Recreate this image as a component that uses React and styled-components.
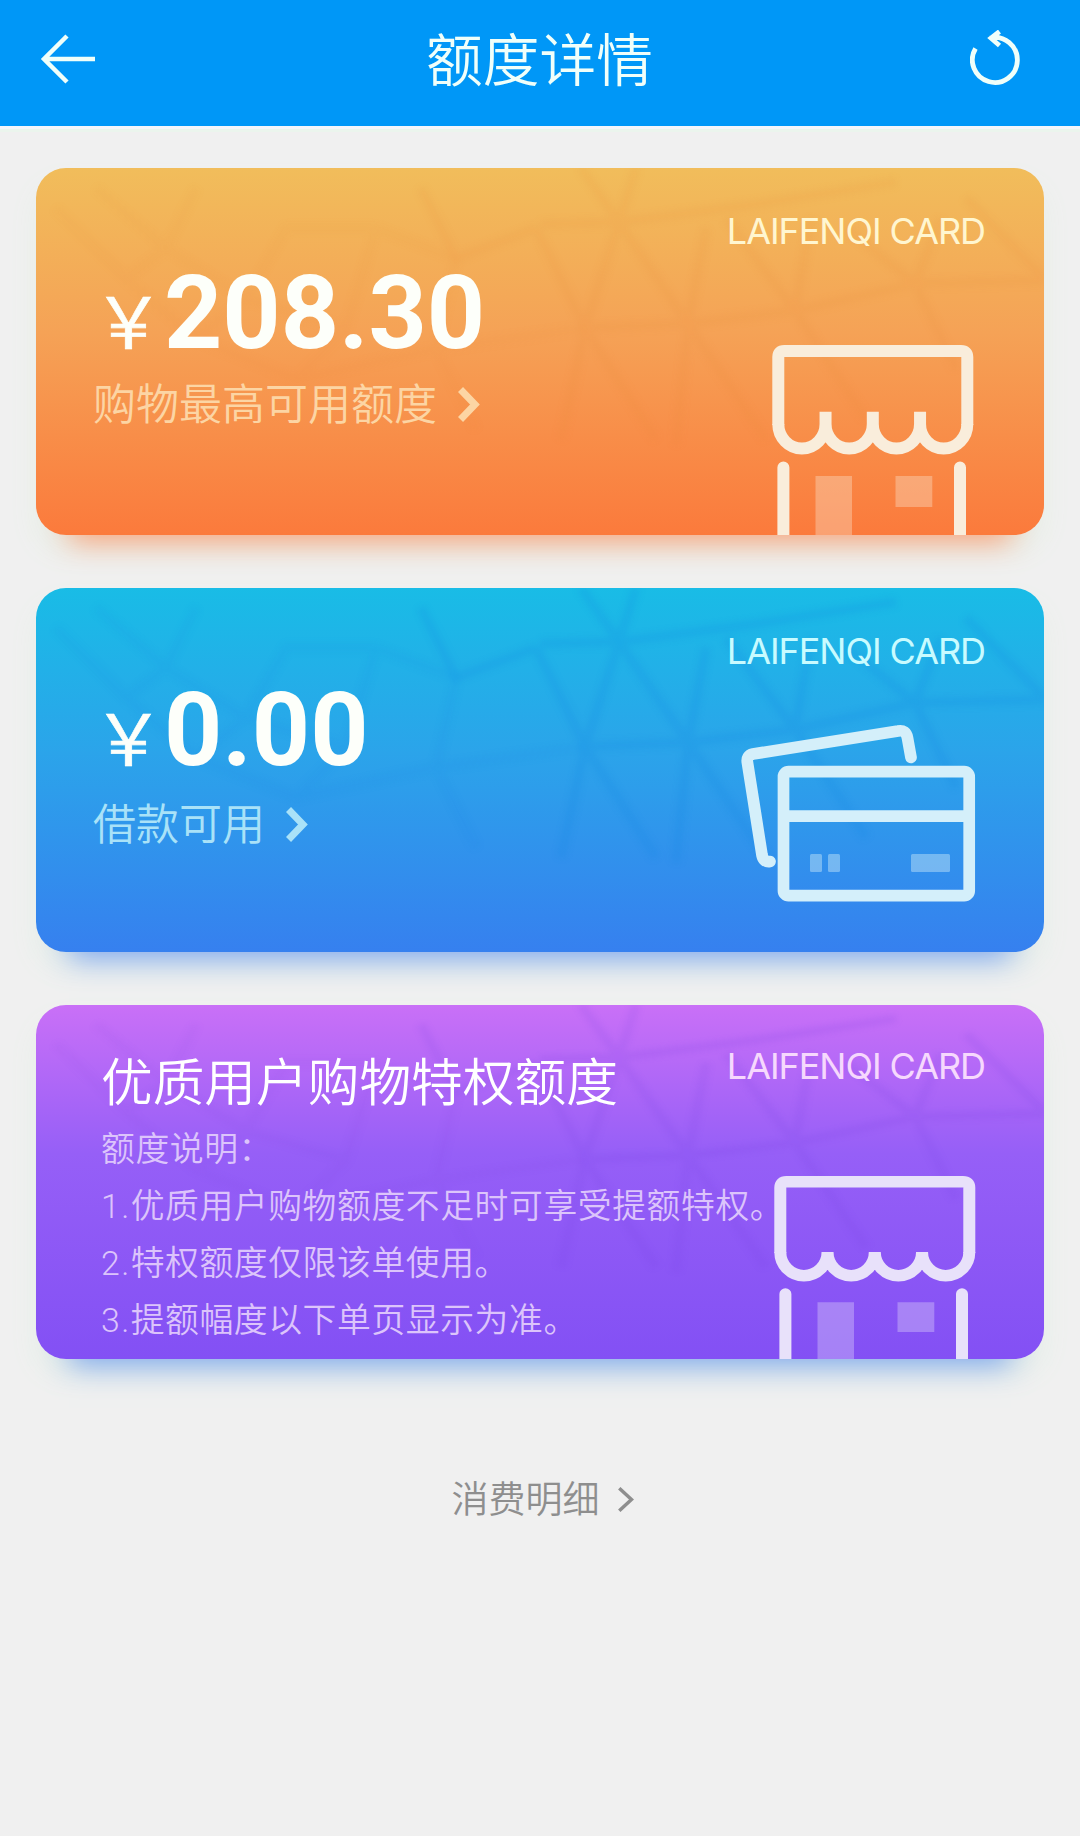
import React from "react";
import styled, { createGlobalStyle } from "styled-components";

const GlobalStyle = createGlobalStyle`
  * { box-sizing: border-box; }
  body { margin: 0; background: #f0f0f0; }
`;

const cjk = `"Noto Sans CJK SC", sans-serif`;

const Page = styled.div`
  width: 1080px;
  min-height: 1836px;
  background: #f0f0f0;
  font-family: Roboto, ${cjk};
  font-weight: 300;
`;

const Header = styled.header`
  display: flex;
  align-items: center;
  justify-content: space-between;
  height: 126px;
  padding: 0 60px 8px 40px;
  background: #0097f7;
  box-shadow: 0 3px 0 #f5f6fb, 0 6px 0 #ebf5ed;
`;

const Title = styled.h1`
  margin: 0 0 7px 13px;
  font: 350 56.7px/80px ${cjk};
  color: #f0fffa;
`;

const CardList = styled.main`
  display: flex;
  flex-direction: column;
  padding: 42px 36px 0;
`;

const Card = styled.section`
  position: relative;
  isolation: isolate;
  display: flex;
  justify-content: space-between;
  height: ${(p) => p.$height}px;
  margin-bottom: ${(p) => p.$gap}px;
  border-radius: 30px;
  background: ${(p) => p.$fill};
  box-shadow: 0 40px 28px -33px ${(p) => p.$glow}, 0 16px 30px -2px #e6efe7;
`;

const MeshArt = styled.svg`
  position: absolute;
  inset: 0;
  z-index: -1;
  width: 100%;
  height: 100%;
  border-radius: 30px;
`;

const MeshLines = styled.g`
  filter: blur(3px);
`;

const Side = styled.div`
  display: flex;
  flex-direction: column;
  align-items: flex-end;
  flex: none;
  width: 290px;
`;

const Brand = styled.div`
  margin-top: ${(p) => p.$top}px;
  margin-right: 59px;
  font: 400 36px/44px Inter, sans-serif;
  letter-spacing: -1.05px;
  white-space: nowrap;
  color: ${(p) => p.$color};
`;

const Info = styled.div`
  display: flex;
  flex-direction: column;
  flex: 1;
  min-width: 0;
  padding-left: ${(p) => p.$left}px;
`;

const Amount = styled.div`
  display: flex;
  align-items: baseline;
  margin-top: ${(p) => p.$top}px;
  font: 700 101.7px/120px Roboto, sans-serif;
  color: #fdfffa;
`;

const Currency = styled.span`
  width: 71px;
  font: 400 71px/80px ${cjk};
  -webkit-text-stroke: 0.6px currentColor;
`;

const Label = styled.div`
  display: flex;
  align-items: center;
  gap: ${(p) => p.$gap}px;
  margin-top: ${(p) => p.$top}px;
  font: 350 43px/56px ${cjk};
  color: ${(p) => p.$color};
`;

const Privilege = styled.h2`
  margin: 38px 0 0;
  font: 350 51.7px/72px ${cjk};
  color: #fff;
`;

const Rules = styled.div`
  margin-top: 6px;
  font: 350 33.8px/57px Roboto, ${cjk};
  letter-spacing: 0.6px;
  color: #dcc4fb;
  white-space: nowrap;
`;

const RuleNumber = styled.span`
  letter-spacing: 1.4px;
`;

const Details = styled.footer`
  display: flex;
  align-items: center;
  justify-content: center;
  gap: 18px;
  margin-top: -3px;
  padding-left: 5px;
  font: 350 37px/54px ${cjk};
  color: #8e8e8e;
`;

const Icon = styled.svg`
  display: block;
  flex: none;
  margin-top: ${(p) => p.$top || 0}px;
  margin-right: ${(p) => p.$right || 0}px;
`;

function Chevron({ w = 22, h = 35, stroke = 7, top = 5 }) {
  return (
    <Icon $top={top} width={w} height={h} viewBox={`0 0 ${w} ${h}`} fill="none" stroke="currentColor" strokeWidth={stroke}>
      <path d={`M${stroke * 0.36} ${stroke * 0.36}L${w - stroke * 0.72} ${h / 2}L${stroke * 0.36} ${h - stroke * 0.36}`} />
    </Icon>
  );
}

function Mesh({ color }) {
  return (
    <MeshArt viewBox="0 0 1008 365" preserveAspectRatio="none" fill="none" stroke={color} strokeWidth="9" aria-hidden="true">
      <MeshLines>
        <path opacity="0.28" d="M545 0L583 54L652 155L759 142L879 115L1008 112M583 54L549 159L652 155M600 0L583 54M500 60L549 159L620 270M652 155L640 275M652 155L730 270M504 56L583 54L720 36L860 14M690 50L759 142L775 50M810 60L879 115L905 50M930 30L1008 110M879 115L920 200M759 142L830 250M549 159L525 270M670 60L652 155M385 20L420 90L500 60" />
        <path opacity="0.13" d="M420 90L400 180L549 159M340 60L420 90M400 180L440 260M20 40L90 110L160 170L260 210L400 180M60 20L130 80L210 130L310 160M90 110L130 80L160 20M160 170L210 130L250 60L340 60M260 210L310 160L340 60" />
      </MeshLines>
    </MeshArt>
  );
}

function Store({ top, right, height, notch, color }) {
  return (
    <Icon $top={top} $right={right} width="202" height={height} viewBox="0 0 202 190" preserveAspectRatio="none" fill="none" stroke={color} strokeWidth="12">
      <path d="M6.300 80V12Q6.300 6 12.300 6H189Q195.300 6 195.300 12V80" />
      <path d={`M6.300 79a23.600 24.500 0 0 0 47.250 0V${notch}V79a23.600 24.500 0 0 0 47.250 0V${notch}V79a23.600 24.500 0 0 0 47.250 0V${notch}V79a23.600 24.500 0 0 0 47.250 0`} />
      <path d="M11.400 192V122.500M188 192V122.500" strokeLinecap="round" />
      <path d="M43.500 131h36.500v60H43.500zM123.500 131h36.800v31h-36.800z" fill={color} stroke="none" opacity="0.34" />
    </Icon>
  );
}

function BankCards({ color }) {
  return (
    <Icon $top={49} $right={68} width="236" height="180" viewBox="740 722 236 180" fill="none" stroke={color} strokeWidth="11.700" strokeLinecap="round">
      <path d="M911 757.500L907.500 738Q906 729.500 898 731L753 754Q746 755.500 747.500 763L762 855Q763.500 862.500 770 861.500" />
      <rect x="783.500" y="771.700" width="185.700" height="124" rx="5" />
      <path d="M784 816.200H969" strokeLinecap="butt" />
      <g fill={color} stroke="none" opacity="0.42">
        <rect x="810" y="854" width="12" height="18" rx="1.500" />
        <rect x="828" y="854" width="12" height="18" rx="1.500" />
        <rect x="911" y="854" width="39" height="18" rx="1.500" />
      </g>
    </Icon>
  );
}

export default function App() {
  return (
    <Page>
      <GlobalStyle />
      <Header>
        <Icon width="56" height="52" viewBox="0 0 56 52" fill="none" stroke="#f0fffa" strokeWidth="4.500">
          <path d="M55 26H4M27 3L4 26L27 49" />
        </Icon>
        <Title>额度详情</Title>
        <Icon width="50" height="58" viewBox="0 0 50 58" fill="none" stroke="#f0fffa" strokeWidth="4.800">
          <path d="M5.500 18.500A22.500 22.500 0 1 0 20 8M29.500 1.500L21 8.200L29.500 15.500" />
        </Icon>
      </Header>
      <CardList>
        <Card $height={367} $gap={53} $fill="linear-gradient(#f1bd5b, #f5a256 45%, #fb7a3c)" $glow="#f9a27a">
          <Mesh color="rgba(232, 130, 50, 0.35)" />
          <Info $left={57}>
            <Amount $top={86}><Currency>￥</Currency>208.30</Amount>
            <Label $top={-1} $gap={21} $color="#fcd5a4">购物最高可用额度<Chevron top={7} /></Label>
          </Info>
          <Side>
            <Brand $top={41} $color="#fff6d0">LAIFENQI CARD</Brand>
            <Store top={92} right={70} height={190} notch={66.7} color="#f9eddb" />
          </Side>
        </Card>
        <Card $height={364} $gap={53} $fill="linear-gradient(#19bce6, #2ba4ea 45%, #3680ef)" $glow="#7ea6f0">
          <Mesh color="rgba(10, 130, 225, 0.6)" />
          <Info $left={57}>
            <Amount $top={83}><Currency>￥</Currency>0.00</Amount>
            <Label $top={2} $gap={21} $color="#a9e2f8">借款可用<Chevron top={7} /></Label>
          </Info>
          <Side>
            <Brand $top={41} $color="#c8fbff">LAIFENQI CARD</Brand>
            <BankCards color="#d4effa" />
          </Side>
        </Card>
        <Card $height={354} $gap={114} $fill="linear-gradient(#c970f7, #965ff7 42%, #8350f4)" $glow="#7fa8ee">
          <Mesh color="rgba(110, 60, 225, 0.4)" />
          <Info $left={65}>
            <Privilege>优质用户购物特权额度</Privilege>
            <Rules>
              <div>额度说明：</div>
              <div><RuleNumber>1.</RuleNumber>优质用户购物额度不足时可享受提额特权。</div>
              <div><RuleNumber>2.</RuleNumber>特权额度仅限该单使用。</div>
              <div><RuleNumber>3.</RuleNumber>提额幅度以下单页显示为准。</div>
            </Rules>
          </Info>
          <Side>
            <Brand $top={39} $color="#f6d8fd">LAIFENQI CARD</Brand>
            <Store top={88} right={68} height={183} notch={79} color="#e8e1fa" />
          </Side>
        </Card>
      </CardList>
      <Details>消费明细<Chevron w={16} h={25} stroke={3.5} top={4} /></Details>
    </Page>
  );
}
